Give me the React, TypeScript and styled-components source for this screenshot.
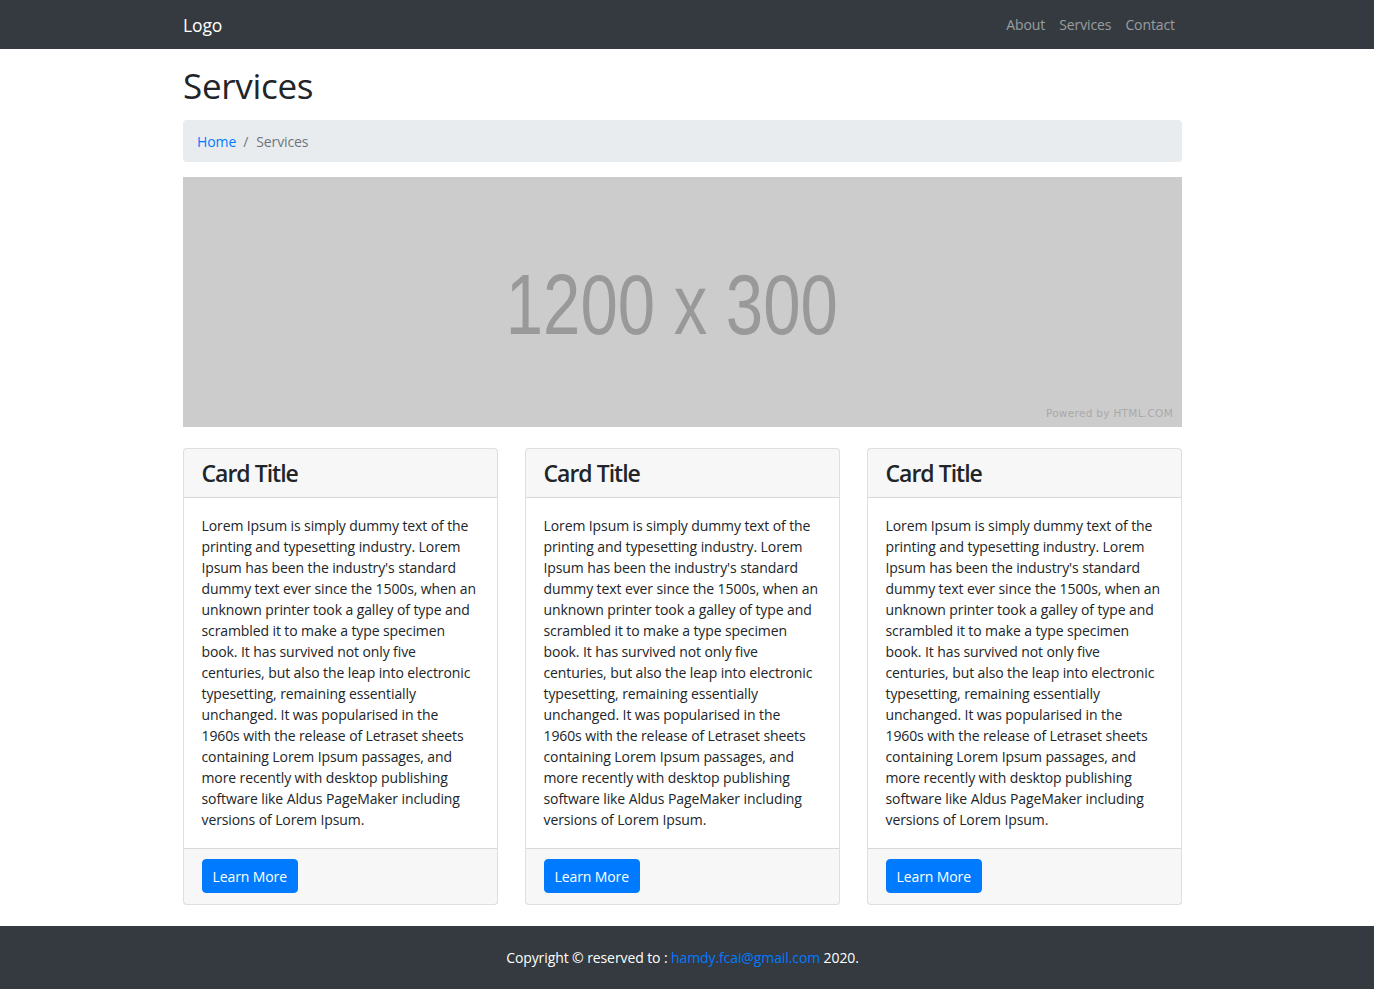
import React from "react";
import styled, { createGlobalStyle } from "styled-components";

const Global = createGlobalStyle`
  html { font-size: 14px; }
  body {
    margin: 0;
    font-family: "Open Sans", "Noto Sans", sans-serif;
    font-size: 14px;
    line-height: 1.5;
    letter-spacing: -0.1px;
    color: #212529;
    background: #fff;
  }
  * { box-sizing: border-box; }
`;

const Container = styled.div`
  width: 999px;
  margin-left: calc(50% - 504px);
`;

const Navbar = styled.nav`
  background: #343a40;
  height: 49px;
`;

const NavInner = styled(Container)`
  height: 100%;
  display: flex;
  align-items: center;
  justify-content: space-between;
`;

const Brand = styled.a`
  color: #fff;
  font-size: 17.5px;
  text-decoration: none;
  line-height: 26px;
`;

const NavLinks = styled.ul`
  display: flex;
  list-style: none;
  margin: 0;
  padding: 0;
`;

const NavLink = styled.a`
  display: block;
  padding: 7px;
  color: rgba(255, 255, 255, 0.5);
  text-decoration: none;
  font-size: 14px;
  line-height: 21px;
`;

const PageTitle = styled.h1`
  font-size: 35px;
  font-weight: 400;
  letter-spacing: -0.3px;
  line-height: 42px;
  margin: 16px 0 13px;
`;

const Breadcrumb = styled.ol`
  display: flex;
  list-style: none;
  margin: 0 0 15px;
  padding: 11px 14px 10px;
  background: #e9ecef;
  border-radius: 4px;
  line-height: 21px;
  & > li + li::before {
    content: "/";
    color: #6c757d;
    padding: 0 8px 0 7px;
  }
`;

const Crumb = styled.li<{ $active?: boolean }>`
  color: ${(p) => (p.$active ? "#6c757d" : "#007bff")};
  a { color: #007bff; text-decoration: none; }
`;

const Banner = styled.div`
  position: relative;
  height: 250px;
  background: #cccccc;
  display: flex;
  align-items: center;
  justify-content: center;
  padding-right: 22px;
  overflow: hidden;
`;

const BannerText = styled.span`
  font-family: "Liberation Sans", Arial, sans-serif;
  font-size: 86px;
  letter-spacing: 0;
  color: #999999;
  transform: scaleX(0.78);
  line-height: 1;
  margin-top: 4px;
`;

const Powered = styled.span`
  position: absolute;
  right: 9px;
  bottom: 5px;
  font-family: "DejaVu Sans", sans-serif;
  font-size: 10.5px;
  color: #a9a9a9;
  letter-spacing: 0.3px;
`;

const CardGrid = styled.div`
  display: grid;
  grid-template-columns: repeat(3, 1fr);
  gap: 27px;
  margin-top: 21px;
  margin-bottom: 21px;
`;

const Card = styled.div`
  display: flex;
  flex-direction: column;
  border: 1px solid rgba(0, 0, 0, 0.125);
  border-radius: 4px;
  background: #fff;
`;

const CardHeader = styled.div`
  padding: 10px 17.5px 9px;
  background: rgba(0, 0, 0, 0.03);
  border-bottom: 1px solid rgba(0, 0, 0, 0.125);
`;

const CardTitle = styled.h3`
  margin: 0;
  font-size: 23px;
  font-weight: 600;
  letter-spacing: -1px;
  line-height: 29px;
`;

const CardBody = styled.div`
  flex: 1;
  padding: 17px 17.5px 17.5px;
`;

const CardText = styled.p`
  margin: 0;
  line-height: 21px;
`;

const CardFooter = styled.div`
  padding: 10.5px 17.5px 10.5px;
  background: rgba(0, 0, 0, 0.03);
  border-top: 1px solid rgba(0, 0, 0, 0.125);
`;

const Button = styled.a`
  display: inline-block;
  padding: 5.5px 10px;
  border: 1px solid #007bff;
  border-radius: 4px;
  background: #007bff;
  color: #fff;
  text-decoration: none;
  line-height: 21px;
  font-size: 14px;
`;

const Footer = styled.footer`
  background: #343a40;
  padding: 21px 0;
`;

const FooterText = styled(Container)`
  text-align: center;
  color: #fff;
  line-height: 21px;
  a { color: #007bff; text-decoration: none; }
`;

const LOREM =
  "Lorem Ipsum is simply dummy text of the printing and typesetting industry. Lorem Ipsum has been the industry's standard dummy text ever since the 1500s, when an unknown printer took a galley of type and scrambled it to make a type specimen book. It has survived not only five centuries, but also the leap into electronic typesetting, remaining essentially unchanged. It was popularised in the 1960s with the release of Letraset sheets containing Lorem Ipsum passages, and more recently with desktop publishing software like Aldus PageMaker including versions of Lorem Ipsum.";

export default function App() {
  return (
    <>
      <Global />
      <Navbar>
        <NavInner>
          <Brand href="#">Logo</Brand>
          <NavLinks>
            <li><NavLink href="#">About</NavLink></li>
            <li><NavLink href="#">Services</NavLink></li>
            <li><NavLink href="#">Contact</NavLink></li>
          </NavLinks>
        </NavInner>
      </Navbar>
      <Container>
        <PageTitle>Services</PageTitle>
        <Breadcrumb>
          <Crumb><a href="#">Home</a></Crumb>
          <Crumb $active>Services</Crumb>
        </Breadcrumb>
        <Banner>
          <BannerText>1200 x 300</BannerText>
          <Powered>Powered by HTML.COM</Powered>
        </Banner>
        <CardGrid>
          {[0, 1, 2].map((i) => (
            <Card key={i}>
              <CardHeader>
                <CardTitle>Card Title</CardTitle>
              </CardHeader>
              <CardBody>
                <CardText>{LOREM}</CardText>
              </CardBody>
              <CardFooter>
                <Button href="#">Learn More</Button>
              </CardFooter>
            </Card>
          ))}
        </CardGrid>
      </Container>
      <Footer>
        <FooterText>
          Copyright © reserved to : <a href="#">hamdy.fcai@gmail.com</a> 2020.
        </FooterText>
      </Footer>
    </>
  );
}
